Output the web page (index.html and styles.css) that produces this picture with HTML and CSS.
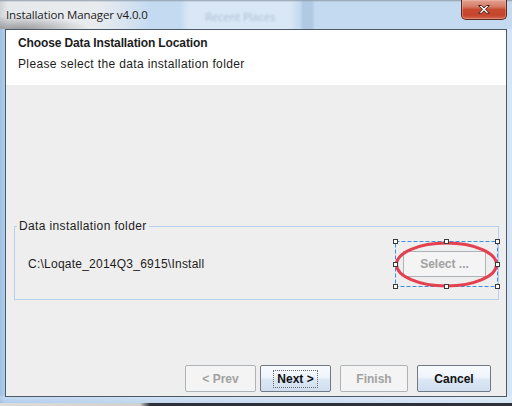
FILE: index.html
```html
<!DOCTYPE html>
<html>
<head>
<meta charset="utf-8">
<link rel="stylesheet" href="styles.css">
</head>
<body>
<div class="window">
  <div class="titlebar">
    <span class="title">Installation Manager v4.0.0</span>
    <span class="ghost">Recent Places</span>
    <button class="close" aria-label="Close">
      <svg width="16" height="11" viewBox="0 0 16 11"><path d="M2.5 1.5h3l2.5 2.3 2.5-2.3h3l-4 3.8 4 3.9h-3L8 6.8 5.5 9.2h-3l4-3.9z" fill="#fff" stroke="#4a2018" stroke-width="1" stroke-linejoin="round"/></svg>
    </button>
  </div>
  <div class="client">
    <div class="header">
      <div class="h-title">Choose Data Installation Location</div>
      <div class="h-sub">Please select the data installation folder</div>
    </div>
    <div class="body">
      <fieldset class="group">
        <legend>Data installation folder</legend>
        <div class="row">
          <span class="path">C:\Loqate_2014Q3_6915\Install</span>
          <div class="select-wrap">
            <button class="btn select" disabled>Select ...</button>
            <svg class="annot" width="108" height="51" viewBox="0 0 108 51">
              <rect x="2.5" y="2.5" width="102" height="45" fill="none" stroke="#3d8fe3" stroke-width="1" stroke-dasharray="4 2"/>
              <ellipse cx="53.5" cy="25.5" rx="50" ry="21.5" fill="none" stroke="#e4404f" stroke-width="3"/>
              <g fill="#fff" stroke="#3a3a3a" stroke-width="1">
                <rect x="0.5" y="0.5" width="4" height="4"/>
                <rect x="51.5" y="0.5" width="4" height="4"/>
                <rect x="102.5" y="0.5" width="4" height="4"/>
                <rect x="0.5" y="23.5" width="4" height="4"/>
                <rect x="102.5" y="23.5" width="4" height="4"/>
                <rect x="0.5" y="45.5" width="4" height="4"/>
                <rect x="51.5" y="45.5" width="4" height="4"/>
                <rect x="102.5" y="45.5" width="4" height="4"/>
              </g>
            </svg>
          </div>
        </div>
      </fieldset>
      <div class="actions">
        <button class="btn btn-prev" disabled>&lt; Prev</button>
        <button class="btn btn-next primary"><span class="focus">Next &gt;</span></button>
        <button class="btn btn-finish" disabled>Finish</button>
        <button class="btn btn-cancel primary">Cancel</button>
      </div>
    </div>
  </div>
</div>
</body>
</html>
```
FILE: styles.css
```css
html, body {
  margin: 0;
  padding: 0;
}
body {
  width: 512px;
  height: 406px;
  overflow: hidden;
  background: linear-gradient(to right, #dcdcdc 0, #d0d0d0 140px, #2e3139 150px, #2e3139 100%);
  font-family: "Liberation Sans", Arial, sans-serif;
}
.window {
  box-sizing: border-box;
  height: 403px;
  padding: 0 5px;
  display: flex;
  flex-direction: column;
  background:
    linear-gradient(to bottom, rgba(255,255,255,0) 0, rgba(255,255,255,0) 395px, rgba(255,255,255,0.25) 397px, rgba(255,255,255,0) 403px),
    linear-gradient(to right, #9fbfe2 0, #b0cdec 5px, #c6daf0 40%, #cddff3 70%, #d6e5f5 100%);
}
.titlebar {
  position: relative;
  height: 29px;
  display: flex;
  align-items: flex-start;
  margin: 0 -5px;
  padding: 0 5px 0 6px;
  background:
    linear-gradient(to bottom, #8e9cab 0, rgba(142,156,171,0) 2px),
    radial-gradient(ellipse 70px 14px at 20px 30px, rgba(80,80,80,0.55), rgba(80,80,80,0) 100%),
    linear-gradient(to right, rgba(0,0,0,0) 0, rgba(0,0,0,0) 300px, rgba(120,150,185,0.25) 303px, rgba(120,150,185,0.25) 312px, rgba(0,0,0,0) 315px),
    linear-gradient(to right, rgba(0,0,0,0) 0, rgba(0,0,0,0) 180px, rgba(255,255,255,0.35) 188px, rgba(255,255,255,0.35) 290px, rgba(0,0,0,0) 300px),
    linear-gradient(to right, #cfd3d8 0, #e6e9ec 8px, #e9ecef 95px, #d8e4f0 125px, #c4daf1 150px, #c4daf1 100%);
}
.title {
  font-family: "Open Sans", "Noto Sans", sans-serif;
  font-size: 11.5px;
  line-height: 15px;
  margin-top: 7px;
  color: #1b1b1b;
  letter-spacing: -0.1px;
}
.ghost {
  position: absolute;
  left: 205px;
  top: 9px;
  font-family: "Open Sans", sans-serif;
  font-size: 11px;
  color: #3e5a7a;
  opacity: 0.3;
  filter: blur(1.2px);
}
.close {
  margin-left: auto;
  width: 46px;
  height: 20px;
  padding: 0;
  box-sizing: border-box;
  border: 1px solid #5b2b22;
  border-top: 0;
  border-radius: 0 0 5px 5px;
  background: linear-gradient(to bottom, #e2a192 0, #d47b66 35%, #c84a31 50%, #c5452c 80%, #d26a50 100%);
  display: flex;
  align-items: center;
  justify-content: center;
  box-shadow: inset 0 0 0 1px rgba(255,200,190,0.35);
}
.close svg {
  display: block;
}
.client {
  box-sizing: border-box;
  height: 368px;
  border: 1px solid #4d5966;
  background: #eeeeee;
  display: flex;
  flex-direction: column;
}
.header {
  box-sizing: border-box;
  height: 55px;
  background: #ffffff;
  padding: 6px 0 0 12px;
  color: #1c1c1c;
  font-size: 12px;
}
.h-title {
  font-weight: bold;
  line-height: 14px;
  letter-spacing: -0.12px;
}
.h-sub {
  line-height: 14px;
  margin-top: 7px;
  letter-spacing: 0.36px;
}
.body {
  flex: 1;
  display: flex;
  flex-direction: column;
  padding: 0 7px 0 8px;
}
.group {
  margin: 134px 0 0 0;
  padding: 18px 0 22px 0;
  border: 1px solid #b7d0ea;
  min-width: 0;
}
.group legend {
  font-size: 12px;
  line-height: 14px;
  color: #1c1c1c;
  padding: 0 2px;
  margin-left: 2px;
  letter-spacing: 0.37px;
}
.row {
  display: flex;
  align-items: center;
  justify-content: space-between;
  padding: 0 12px 0 13px;
  height: 26px;
}
.path {
  font-size: 12px;
  color: #1c1c1c;
  letter-spacing: 0.24px;
}
.select-wrap {
  position: relative;
}
.btn {
  box-sizing: border-box;
  height: 27px;
  padding: 0;
  font-family: "Liberation Sans", Arial, sans-serif;
  font-size: 12px;
  font-weight: bold;
  color: #111;
  border: 1px solid #707a86;
  border-radius: 2px;
  background: linear-gradient(to bottom, #f8fbfe 0, #eef4fb 45%, #dbe7f4 55%, #cfdeef 100%);
}
.btn[disabled] {
  color: #a2a2a2;
  border-color: #aeb3b8;
  background: #f4f4f4;
}
.select {
  width: 83px;
  height: 26px;
  border-radius: 0;
  border-color: #9e9e9e;
  background: #eeeeee;
  color: #a0a0a0;
  display: block;
}
.annot {
  position: absolute;
  left: -10px;
  top: -12px;
  pointer-events: none;
}
.actions {
  display: flex;
  justify-content: flex-end;
  margin-top: 65px;
  padding-right: 8px;
}
.btn-prev { width: 71px; }
.btn-next { width: 71px; margin-left: 4px; }
.btn-finish { width: 68px; margin-left: 9px; }
.btn-cancel { width: 74px; margin-left: 9px; }
.focus {
  display: inline-block;
  padding: 1px 3px;
  outline: 1px dotted #6a6a6a;
  line-height: 14px;
}
```
